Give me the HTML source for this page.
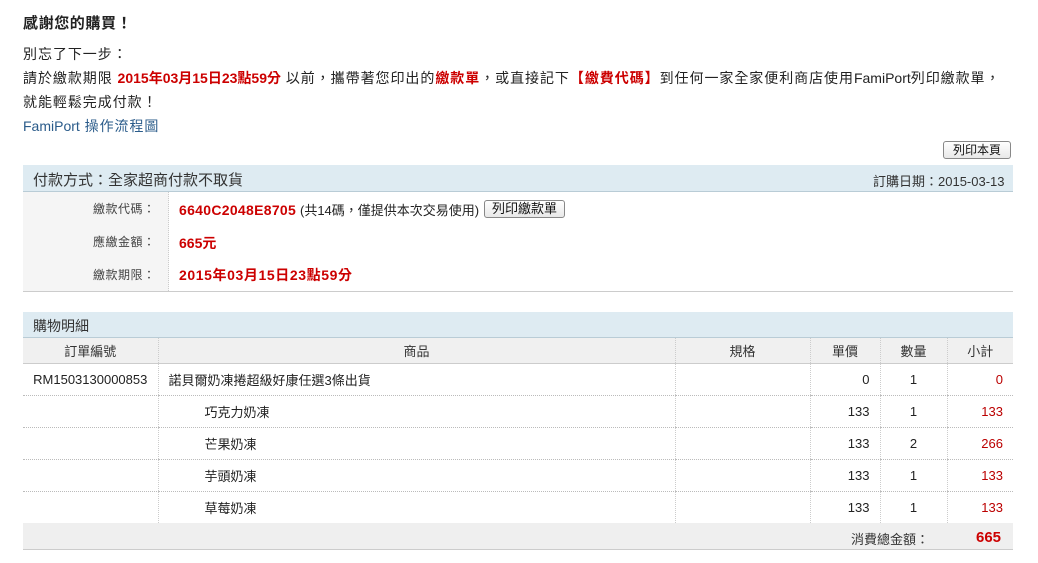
<!DOCTYPE html>
<html><head><meta charset="utf-8"><style>
*{margin:0;padding:0;box-sizing:border-box}
body{width:1038px;height:563px;background:#fff;font-family:"Liberation Sans","Noto Sans CJK TC",sans-serif;color:#222;position:relative;overflow:hidden}
.a{position:absolute;white-space:nowrap}
.r{color:#c00;font-weight:bold}
.btn{position:absolute;border:1px solid #888;border-radius:3px;background:linear-gradient(#fff,#e8e8e8);font-size:12px;line-height:16px;text-align:center;color:#111}
.band{position:absolute;left:23px;width:990px;background:#deebf2;border-bottom:1px solid #b9ccd6}
table{position:absolute;left:23px;top:338px;width:990px;border-collapse:collapse;font-size:13px}
td,th{height:32px;border-left:1px dotted #ccc;border-bottom:1px dotted #bbb;padding:0 10px}
th{height:25px;background:#f0f0f0;font-weight:normal;color:#333;border-bottom:1px solid #ccc}
tr td:first-child,tr th:first-child{border-left:none}
td.n{text-align:right}
td.c{text-align:center}
td.s{text-align:right;color:#b00}
tr.last td{border-bottom:1px solid #ccc}
.l{letter-spacing:0}
</style></head><body>
<div class="a" style="left:23px;top:12px;font-size:15px;font-weight:bold;letter-spacing:0.6px">感謝您的購買！</div>
<div class="a" style="left:23px;top:42px;font-size:14px;line-height:24px;letter-spacing:0.95px">別忘了下一步：<br>請於繳款期限 <span class="r l">2015年03月15日23點59分</span> 以前，攜帶著您印出的<span class="r">繳款單</span>，或直接記下<span class="r">【繳費代碼】</span>到任何一家全家便利商店使用<span class="l">FamiPort</span>列印繳款單，<br>就能輕鬆完成付款！<br><span style="color:#2a5b8a"><span class="l">FamiPort</span> 操作流程圖</span></div>
<div class="btn" style="left:943px;top:141px;width:68px;height:18px">列印本頁</div>
<div class="band" style="top:165px;height:27px"></div>
<div class="a" style="left:33px;top:169px;font-size:15px;color:#333">付款方式：全家超商付款不取貨</div>
<div class="a" style="left:873px;top:171px;font-size:13px;color:#333">訂購日期：2015-03-13</div>
<div class="a" style="left:23px;top:192px;width:146px;height:99px;background:#f5f5f5;border-right:1px dotted #ccc"></div>
<div class="a" style="left:23px;top:291px;width:990px;border-top:1px solid #ccc"></div>
<div class="a" style="left:93px;top:200px;font-size:12px;color:#444;letter-spacing:0.5px">繳款代碼：</div>
<div class="a" style="left:93px;top:233px;font-size:12px;color:#444;letter-spacing:0.5px">應繳金額：</div>
<div class="a" style="left:93px;top:266px;font-size:12px;color:#444;letter-spacing:0.5px">繳款期限：</div>
<div class="a" style="left:179px;top:200px;font-size:14px"><span class="r" style="letter-spacing:0.3px">6640C2048E8705</span> <span style="font-size:13px">(共14碼，僅提供本次交易使用)</span></div>
<div class="btn" style="left:484px;top:200px;width:81px;height:18px;font-size:13px">列印繳款單</div>
<div class="a r" style="left:179px;top:233px;font-size:14px">665元</div>
<div class="a r" style="left:179px;top:265px;font-size:14px;letter-spacing:0.6px">2015年03月15日23點59分</div>
<div class="band" style="top:312px;height:26px"></div>
<div class="a" style="left:33px;top:316px;font-size:14px;color:#333">購物明細</div>
<table>
<tr><th style="width:135px">訂單編號</th><th style="width:517px">商品</th><th style="width:135px">規格</th><th style="width:70px">單價</th><th style="width:67px">數量</th><th>小計</th></tr>
<tr><td class="c" style="padding:0">RM1503130000853</td><td>諾貝爾奶凍捲超級好康任選3條出貨</td><td></td><td class="n">0</td><td class="c">1</td><td class="s">0</td></tr>
<tr><td></td><td style="padding-left:46px">巧克力奶凍</td><td></td><td class="n">133</td><td class="c">1</td><td class="s">133</td></tr>
<tr><td></td><td style="padding-left:46px">芒果奶凍</td><td></td><td class="n">133</td><td class="c">2</td><td class="s">266</td></tr>
<tr><td></td><td style="padding-left:46px">芋頭奶凍</td><td></td><td class="n">133</td><td class="c">1</td><td class="s">133</td></tr>
<tr class="last"><td></td><td style="padding-left:46px">草莓奶凍</td><td></td><td class="n">133</td><td class="c">1</td><td class="s">133</td></tr>
</table>
<div class="a" style="left:23px;top:523px;width:990px;height:27px;background:#efefef;border-bottom:1px solid #ccc"></div>
<div class="a" style="left:851px;top:529px;font-size:13px;color:#333">消費總金額：</div>
<div class="a r" style="left:976px;top:529px;font-size:15px">665</div>
</body></html>
